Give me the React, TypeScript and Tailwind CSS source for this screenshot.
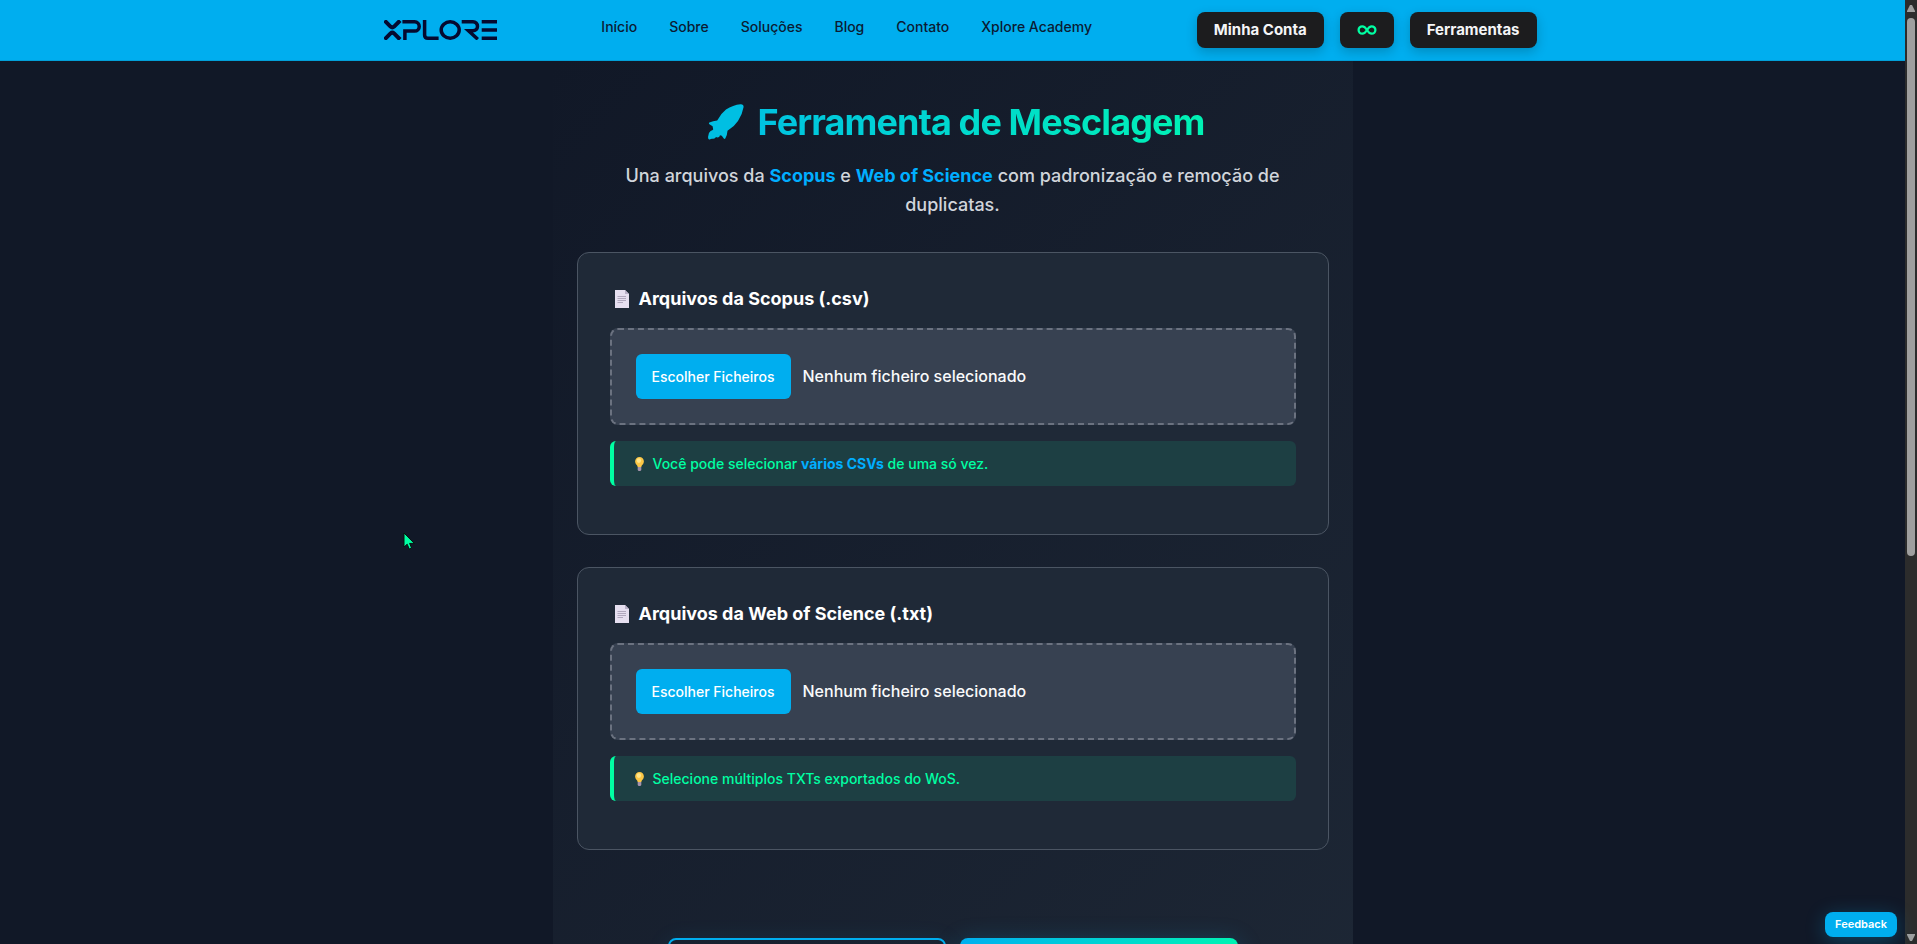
import { useState } from "react";
import type { ChangeEvent, ReactNode } from "react";

const NAV_LINKS = ["Início", "Sobre", "Soluções", "Blog", "Contato", "Xplore Academy"];

function Logo() {
  return (
    <svg
      className="h-5 w-[113px]"
      viewBox="0 0 113 20"
      fill="none"
      stroke="#050a30"
      strokeWidth="3.5"
      role="img"
      aria-label="Xplore"
    >
      <path d="M0.5 0.5 6.5 6.6Q8.3 8.2 10.1 6.6L16.1 0.5M0.5 19.5 6.5 13.4Q8.3 11.8 10.1 13.4L16.1 19.5" strokeWidth="4" />
      <path d="M18.4 1.75H30.6a4.6 4.6 0 0 1 0 9.3H20.9V20" />
      <path d="M40.6 0V15Q40.6 18.25 44 18.25H54.6" />
      <ellipse cx="66.2" cy="10" rx="9" ry="8.2" />
      <path d="M77.7 1.75H89a4.5 4.5 0 0 1 0 9H84.5L93.8 19.2" />
      <path d="M97.7 1.75H113M97.7 10H113M97.7 18.25H113" />
    </svg>
  );
}

function Rocket() {
  return (
    <svg className="size-9" viewBox="0 0 36 36" fill="#00bfe3" aria-hidden="true">
      <path d="M32.5 0.2Q35.6 0 35.6 3Q34.5 10 30 17Q26 23 19.5 26.8Q19.3 31 17.3 34.6Q16.4 35.5 15.6 34.2L13.8 31.7L12 31.2Q11.6 33.4 9.4 33.4Q8.5 33.2 8 33Q7 35.2 4.5 34.7Q3 34.5 1.8 35.4Q0 35.8 0.1 33.5Q-0.2 29 2.6 27Q4.6 26.3 5.2 25.6L4.6 22.3L1.4 20.2Q0.4 19.3 1.4 18.6Q5 16.7 9.2 16.4Q12.5 10 18 5.6Q25 0.8 32.5 0.2Z" />
    </svg>
  );
}

function InfinityIcon() {
  return (
    <svg className="h-2.5 w-5" viewBox="0 0 20 10" fill="none" stroke="#00ffa3" strokeWidth="2.3" aria-hidden="true">
      <path d="M10 5C8.6 2.6 7.2 1.3 5.3 1.3A3.7 3.7 0 0 0 5.3 8.7C7.2 8.7 8.6 7.4 10 5C11.4 2.6 12.8 1.3 14.7 1.3A3.7 3.7 0 0 1 14.7 8.7C12.8 8.7 11.4 7.4 10 5Z" />
    </svg>
  );
}

function PageIcon() {
  return (
    <svg className="h-[18px] w-3.5 shrink-0" viewBox="0 0 14 18" aria-hidden="true">
      <path d="M0 0H10L14 4V18H0Z" fill="#e6dff0" />
      <path d="M10 0V4H14Z" fill="#b9b0c8" />
      <path d="M2.5 6.5H11M2.5 8.5H11M2.5 10.5H11M2.5 12.5H8" stroke="#aaa1b8" strokeWidth="0.9" />
    </svg>
  );
}

function BulbIcon() {
  return (
    <svg className="h-3.5 w-[9px] shrink-0" viewBox="0 0 9 14" aria-hidden="true">
      <path d="M4.5 0A4.4 4.4 0 0 1 8.9 4.4C8.9 7 6.6 7.7 6.3 10H2.7C2.4 7.7 0.1 7 0.1 4.4A4.4 4.4 0 0 1 4.5 0Z" fill="#fcc746" />
      <ellipse cx="3.9" cy="3.6" rx="2.2" ry="2.4" fill="#ffe68a" />
      <path d="M2.7 10H6.3V13L5.4 14H3.6L2.7 13Z" fill="#a694ad" />
    </svg>
  );
}

function Cursor() {
  return (
    <svg className="absolute left-[403px] top-[532px] h-[18px] w-3" viewBox="0 0 12 18" aria-hidden="true">
      <path d="M1 1V15L4.2 12.2L6.2 17L8.6 16L6.6 11.4H11.3Z" fill="#00ffa3" stroke="#06120f" strokeWidth="1" />
    </svg>
  );
}

function DarkButton({ children, label }: { children: ReactNode; label?: string }) {
  return (
    <button
      type="button"
      aria-label={label}
      className="flex h-9 items-center rounded-lg bg-[#1c1c1e] px-[17px] text-[15px] font-bold text-[#f5f5f7] shadow-[0_4px_12px_rgba(0,0,0,0.2)]"
    >
      {children}
    </button>
  );
}

function Header() {
  return (
    <header className="relative z-10 h-[61px] shrink-0 border-b border-[#029fd8] bg-[#00aeef]">
      <div className="mx-auto flex h-full max-w-[1200px] items-center justify-between pl-[31px] pr-4">
        <a href="#inicio">
          <Logo />
        </a>
        <nav className="flex gap-8 pb-1.5 text-sm font-medium text-[#0b1b33]">
          {NAV_LINKS.map((item) => (
            <a key={item} href="#">
              {item}
            </a>
          ))}
        </nav>
        <div className="flex gap-4">
          <DarkButton>Minha Conta</DarkButton>
          <DarkButton label="Infinito">
            <InfinityIcon />
          </DarkButton>
          <DarkButton>Ferramentas</DarkButton>
        </div>
      </div>
    </header>
  );
}

function UploadCard({
  id,
  title,
  accept,
  children,
}: {
  id: string;
  title: string;
  accept: string;
  children: ReactNode;
}) {
  const [status, setStatus] = useState("Nenhum ficheiro selecionado");

  const onChange = (e: ChangeEvent<HTMLInputElement>) => {
    const count = e.target.files?.length ?? 0;
    setStatus(count ? `${count} ficheiro(s)` : "Nenhum ficheiro selecionado");
  };

  return (
    <section className="rounded-xl border border-[#4b5563] bg-[#1f2937] px-8 pb-12 pt-8">
      <h2 className="flex items-center gap-2.5 pl-[5px] text-lg leading-[27px] font-bold text-white">
        <PageIcon />
        {title}
      </h2>
      <div className="relative mt-4 rounded-lg border-2 border-dashed border-[#6b7280] bg-[#374151] p-6">
        <input id={id} type="file" multiple accept={accept} onChange={onChange} className="peer sr-only" />
        <label htmlFor={id} className="flex cursor-pointer items-baseline gap-3 text-base font-medium text-[#f9fafb]">
          <span className="rounded-md bg-[#00aeef] px-4 text-sm leading-[45px] font-medium text-white">
            Escolher Ficheiros
          </span>
          {status}
        </label>
      </div>
      <p className="mt-4 flex items-center gap-[9px] rounded-md border-l-4 border-[#00ffa3] bg-[#1d3f43] px-[21px] text-sm leading-[45px] font-medium text-[#00ffa3]">
        <BulbIcon />
        <span>{children}</span>
      </p>
    </section>
  );
}

// Slim dark track with the arrows at both ends
function ScrollTrack() {
  return (
    <div className="flex w-3 shrink-0 flex-col items-center bg-[#2c2c2c]" aria-hidden="true">
      <svg className="my-1 h-2.5 w-2" viewBox="0 0 8 10" fill="#9f9f9f">
        <path d="M3 1H5L8 7V8H0V7Z" />
      </svg>
      <div className="h-[57%] w-2 rounded-full bg-[#9f9f9f]" />
      <svg className="mb-0.5 mt-auto h-2.5 w-2" viewBox="0 0 8 10" fill="#9f9f9f">
        <path d="M0 2H8V3L5 9H3L0 3Z" />
      </svg>
    </div>
  );
}

export default function App() {
  return (
    <div className="relative flex h-screen overflow-hidden bg-[#111827] font-['Inter',sans-serif]">
      <div className="flex min-w-0 flex-1 flex-col">
        <Header />
        <main className="min-h-0 flex-1 overflow-hidden">
          <div className="mx-auto min-h-[1200px] max-w-[800px] bg-linear-135 from-[#111827] to-[#1f2937] px-6 pt-10">
            <h1 className="flex items-center justify-center gap-[13px] bg-linear-to-r from-[#00aeef] to-[#00ffa3] bg-clip-text pl-2 text-4xl leading-[42px] font-bold tracking-tight text-transparent">
              <Rocket />
              Ferramenta de Mesclagem
            </h1>
            <p className="mx-auto mt-[18px] max-w-[700px] text-center text-lg leading-[29px] font-medium text-[#d1d5db]">
              Una arquivos da <strong className="font-bold text-[#00aeff]">Scopus</strong> e{" "}
              <strong className="font-bold text-[#00aeff]">Web of Science</strong> com padronização e remoção de
              duplicatas.
            </p>
            <form className="mt-[33px] flex flex-col gap-8">
              <UploadCard id="scopus" title="Arquivos da Scopus (.csv)" accept=".csv">
                Você pode selecionar <strong className="font-bold text-[#00aeff]">vários CSVs</strong> de uma só vez.
              </UploadCard>
              <UploadCard id="wos" title="Arquivos da Web of Science (.txt)" accept=".txt">
                Selecione múltiplos TXTs exportados do WoS.
              </UploadCard>
              <div className="mt-14 flex justify-center gap-3.5">
                <button
                  type="reset"
                  aria-label="Limpar"
                  className="h-14 w-[278px] rounded-lg border-2 border-[#00aeef] shadow-[0_4px_24px_rgba(0,174,239,0.12)]"
                />
                <button
                  type="submit"
                  aria-label="Mesclar"
                  className="h-14 w-[278px] rounded-lg bg-linear-135 from-[#00aeef] to-[#00ffa3] shadow-[0_4px_24px_rgba(0,174,239,0.25)]"
                />
              </div>
            </form>
          </div>
        </main>
      </div>
      <ScrollTrack />
      <button
        type="button"
        className="absolute bottom-[7px] right-5 z-10 h-[25px] rounded-lg bg-[#00aeef] px-2.5 text-[11px] font-semibold text-white shadow-[0_4px_20px_rgba(0,174,239,0.3)]"
      >
        Feedback
      </button>
      <Cursor />
    </div>
  );
}
